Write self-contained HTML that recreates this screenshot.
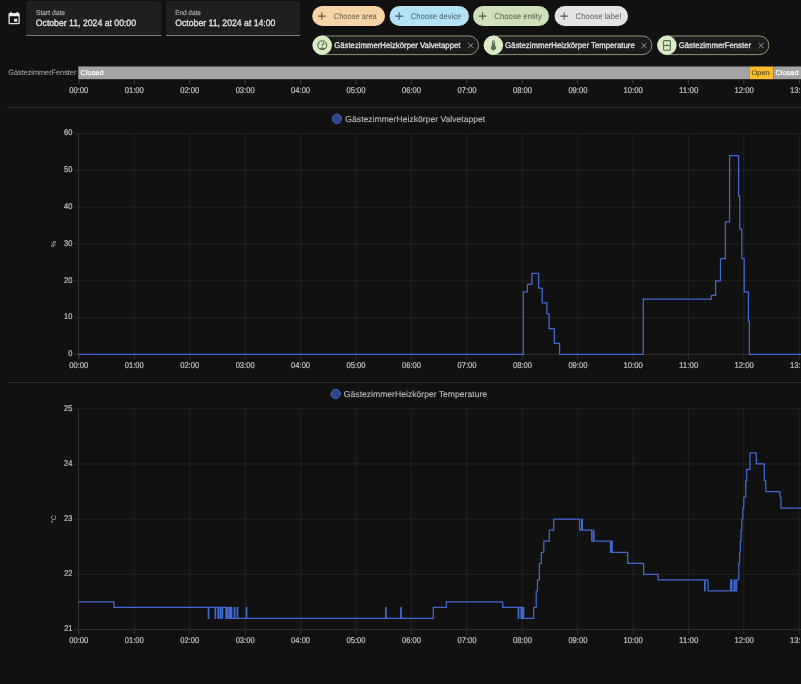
<!DOCTYPE html>
<html><head><meta charset="utf-8">
<style>
html,body{margin:0;padding:0;background:#111111;width:801px;height:684px;overflow:hidden;}
svg{position:absolute;left:0;top:0;font-family:"Liberation Sans", sans-serif;will-change:transform;}
</style></head><body>
<svg width="801" height="684" viewBox="0 0 801 684"><g transform="translate(6.6 11.2) scale(0.625)"><path fill="#e8e8e8" d="M19,19H5V8H19M16,1V3H8V1H6V3H5C3.89,3 3,3.89 3,5V19A2,2 0 0,0 5,21H19A2,2 0 0,0 21,19V5C21,3.89 20.1,3 19,3H18V1M17,12H12V17H17V12Z"/></g>
<path d="M26 36V5A4 4 0 0 1 30 1H157A4 4 0 0 1 161 5V36Z" fill="#1f1f1f"/>
<rect x="26.00" y="35.00" width="135.00" height="1.00" rx="0" fill="#7c7c7c"/>
<path d="M166 36V5A4 4 0 0 1 170 1H296A4 4 0 0 1 300 5V36Z" fill="#1f1f1f"/>
<rect x="166.00" y="35.00" width="134.00" height="1.00" rx="0" fill="#7c7c7c"/>
<rect x="312.20" y="6.00" width="72.80" height="20.00" rx="10" fill="#f7d4a6"/>
<g transform="translate(315.37 9.67) scale(0.536)"><path fill="rgba(0,0,0,0.6)" d="M19,13H13V19H11V13H5V11H11V5H13V11H19V13Z"/></g>
<rect x="389.50" y="6.00" width="79.50" height="20.00" rx="10" fill="#b3e1f6"/>
<g transform="translate(392.67 9.67) scale(0.536)"><path fill="rgba(0,0,0,0.6)" d="M19,13H13V19H11V13H5V11H11V5H13V11H19V13Z"/></g>
<rect x="473.00" y="6.00" width="76.00" height="20.00" rx="10" fill="#cde0b8"/>
<g transform="translate(476.17 9.67) scale(0.536)"><path fill="rgba(0,0,0,0.6)" d="M19,13H13V19H11V13H5V11H11V5H13V11H19V13Z"/></g>
<rect x="554.60" y="6.00" width="73.40" height="20.00" rx="10" fill="#e3e3e3"/>
<g transform="translate(557.77 9.67) scale(0.536)"><path fill="rgba(0,0,0,0.6)" d="M19,13H13V19H11V13H5V11H11V5H13V11H19V13Z"/></g>
<rect x="312.90" y="36" width="165.60" height="18.6" rx="9.3" fill="#1b1b1b" stroke="#899878" stroke-width="1"/>
<circle cx="322.25" cy="45.25" r="9.65" fill="#d9ecc6"/>
<circle cx="322.25" cy="45.25" r="4.45" fill="none" stroke="#5f6b55" stroke-width="1.1"/><path d="M318.70 48.00Q322.25 47.15 325.80 48.00A4.5 4.5 0 0 1 318.70 48.00Z" fill="#5f6b55"/><path d="M322.25 45.65L323.75 42.85" stroke="#5f6b55" stroke-width="1.2" stroke-linecap="round"/><circle cx="319.35" cy="43.85" r="0.5" fill="#5f6b55"/><circle cx="324.85" cy="44.05" r="0.5" fill="#5f6b55"/><circle cx="321.95" cy="42.25" r="0.45" fill="#5f6b55"/>
<path d="M468.30 43.1L473.10 47.9M473.10 43.1L468.30 47.9" stroke="#a8a8a8" stroke-width="0.9"/>
<rect x="484.10" y="36" width="167.80" height="18.6" rx="9.3" fill="#1b1b1b" stroke="#899878" stroke-width="1"/>
<circle cx="493.45" cy="45.25" r="9.65" fill="#d9ecc6"/>
<g transform="translate(487.45 39.25) scale(0.5)"><path fill="#5f6b55" d="M15 13V5A3 3 0 0 0 9 5V13A5 5 0 1 0 15 13M12 4A1 1 0 0 1 13 5V8H11V5A1 1 0 0 1 12 4Z"/></g>
<path d="M641.70 43.1L646.50 47.9M646.50 43.1L641.70 47.9" stroke="#a8a8a8" stroke-width="0.9"/>
<rect x="657.60" y="36" width="111.30" height="18.6" rx="9.3" fill="#1b1b1b" stroke="#899878" stroke-width="1"/>
<circle cx="666.95" cy="45.25" r="9.65" fill="#d9ecc6"/>
<rect x="663.55" y="40.65" width="6.8" height="9.6" rx="1" fill="none" stroke="#5f6b55" stroke-width="1.1"/><rect x="663.55" y="45.05" width="6.8" height="1" fill="#5f6b55"/><rect x="666.25" y="44.15" width="1.4" height="1" fill="#5f6b55"/>
<path d="M758.70 43.1L763.50 47.9M763.50 43.1L758.70 47.9" stroke="#a8a8a8" stroke-width="0.9"/>
<rect x="78.30" y="66.50" width="671.00" height="12.70" rx="0" fill="#a3a3a3"/>
<rect x="749.30" y="66.50" width="24.20" height="12.70" rx="0" fill="#fdbd2c"/>
<rect x="773.50" y="66.50" width="40.00" height="12.70" rx="0" fill="#a3a3a3"/>
<line x1="79.00" y1="79.20" x2="79.00" y2="84.20" stroke="#3a3a3a" stroke-width="1"/>
<line x1="134.40" y1="79.20" x2="134.40" y2="84.20" stroke="#3a3a3a" stroke-width="1"/>
<line x1="189.80" y1="79.20" x2="189.80" y2="84.20" stroke="#3a3a3a" stroke-width="1"/>
<line x1="245.20" y1="79.20" x2="245.20" y2="84.20" stroke="#3a3a3a" stroke-width="1"/>
<line x1="300.60" y1="79.20" x2="300.60" y2="84.20" stroke="#3a3a3a" stroke-width="1"/>
<line x1="356.00" y1="79.20" x2="356.00" y2="84.20" stroke="#3a3a3a" stroke-width="1"/>
<line x1="411.40" y1="79.20" x2="411.40" y2="84.20" stroke="#3a3a3a" stroke-width="1"/>
<line x1="466.80" y1="79.20" x2="466.80" y2="84.20" stroke="#3a3a3a" stroke-width="1"/>
<line x1="522.20" y1="79.20" x2="522.20" y2="84.20" stroke="#3a3a3a" stroke-width="1"/>
<line x1="577.60" y1="79.20" x2="577.60" y2="84.20" stroke="#3a3a3a" stroke-width="1"/>
<line x1="633.00" y1="79.20" x2="633.00" y2="84.20" stroke="#3a3a3a" stroke-width="1"/>
<line x1="688.40" y1="79.20" x2="688.40" y2="84.20" stroke="#3a3a3a" stroke-width="1"/>
<line x1="743.80" y1="79.20" x2="743.80" y2="84.20" stroke="#3a3a3a" stroke-width="1"/>
<line x1="799.20" y1="79.20" x2="799.20" y2="84.20" stroke="#3a3a3a" stroke-width="1"/>
<line x1="7.00" y1="107.50" x2="801.00" y2="107.50" stroke="#2c2c2c" stroke-width="1"/>
<line x1="7.00" y1="382.50" x2="801.00" y2="382.50" stroke="#2c2c2c" stroke-width="1"/>
<line x1="74.00" y1="354.40" x2="860.00" y2="354.40" stroke="#2f2f2f" stroke-width="1"/>
<line x1="74.00" y1="317.58" x2="860.00" y2="317.58" stroke="#222222" stroke-width="1"/>
<line x1="74.00" y1="280.77" x2="860.00" y2="280.77" stroke="#222222" stroke-width="1"/>
<line x1="74.00" y1="243.95" x2="860.00" y2="243.95" stroke="#222222" stroke-width="1"/>
<line x1="74.00" y1="207.13" x2="860.00" y2="207.13" stroke="#222222" stroke-width="1"/>
<line x1="74.00" y1="170.32" x2="860.00" y2="170.32" stroke="#222222" stroke-width="1"/>
<line x1="74.00" y1="133.50" x2="860.00" y2="133.50" stroke="#222222" stroke-width="1"/>
<line x1="79.00" y1="354.40" x2="79.00" y2="359.20" stroke="#2f2f2f" stroke-width="1"/>
<line x1="134.40" y1="133.50" x2="134.40" y2="354.40" stroke="#222222" stroke-width="1"/>
<line x1="134.40" y1="354.40" x2="134.40" y2="359.20" stroke="#2f2f2f" stroke-width="1"/>
<line x1="189.80" y1="133.50" x2="189.80" y2="354.40" stroke="#222222" stroke-width="1"/>
<line x1="189.80" y1="354.40" x2="189.80" y2="359.20" stroke="#2f2f2f" stroke-width="1"/>
<line x1="245.20" y1="133.50" x2="245.20" y2="354.40" stroke="#222222" stroke-width="1"/>
<line x1="245.20" y1="354.40" x2="245.20" y2="359.20" stroke="#2f2f2f" stroke-width="1"/>
<line x1="300.60" y1="133.50" x2="300.60" y2="354.40" stroke="#222222" stroke-width="1"/>
<line x1="300.60" y1="354.40" x2="300.60" y2="359.20" stroke="#2f2f2f" stroke-width="1"/>
<line x1="356.00" y1="133.50" x2="356.00" y2="354.40" stroke="#222222" stroke-width="1"/>
<line x1="356.00" y1="354.40" x2="356.00" y2="359.20" stroke="#2f2f2f" stroke-width="1"/>
<line x1="411.40" y1="133.50" x2="411.40" y2="354.40" stroke="#222222" stroke-width="1"/>
<line x1="411.40" y1="354.40" x2="411.40" y2="359.20" stroke="#2f2f2f" stroke-width="1"/>
<line x1="466.80" y1="133.50" x2="466.80" y2="354.40" stroke="#222222" stroke-width="1"/>
<line x1="466.80" y1="354.40" x2="466.80" y2="359.20" stroke="#2f2f2f" stroke-width="1"/>
<line x1="522.20" y1="133.50" x2="522.20" y2="354.40" stroke="#222222" stroke-width="1"/>
<line x1="522.20" y1="354.40" x2="522.20" y2="359.20" stroke="#2f2f2f" stroke-width="1"/>
<line x1="577.60" y1="133.50" x2="577.60" y2="354.40" stroke="#222222" stroke-width="1"/>
<line x1="577.60" y1="354.40" x2="577.60" y2="359.20" stroke="#2f2f2f" stroke-width="1"/>
<line x1="633.00" y1="133.50" x2="633.00" y2="354.40" stroke="#222222" stroke-width="1"/>
<line x1="633.00" y1="354.40" x2="633.00" y2="359.20" stroke="#2f2f2f" stroke-width="1"/>
<line x1="688.40" y1="133.50" x2="688.40" y2="354.40" stroke="#222222" stroke-width="1"/>
<line x1="688.40" y1="354.40" x2="688.40" y2="359.20" stroke="#2f2f2f" stroke-width="1"/>
<line x1="743.80" y1="133.50" x2="743.80" y2="354.40" stroke="#222222" stroke-width="1"/>
<line x1="743.80" y1="354.40" x2="743.80" y2="359.20" stroke="#2f2f2f" stroke-width="1"/>
<line x1="799.20" y1="133.50" x2="799.20" y2="354.40" stroke="#222222" stroke-width="1"/>
<line x1="799.20" y1="354.40" x2="799.20" y2="359.20" stroke="#2f2f2f" stroke-width="1"/>
<line x1="78.50" y1="133.50" x2="78.50" y2="359.20" stroke="#2f2f2f" stroke-width="1"/>
<line x1="74.00" y1="629.50" x2="860.00" y2="629.50" stroke="#2f2f2f" stroke-width="1"/>
<line x1="74.00" y1="574.33" x2="860.00" y2="574.33" stroke="#222222" stroke-width="1"/>
<line x1="74.00" y1="519.15" x2="860.00" y2="519.15" stroke="#222222" stroke-width="1"/>
<line x1="74.00" y1="463.98" x2="860.00" y2="463.98" stroke="#222222" stroke-width="1"/>
<line x1="74.00" y1="408.80" x2="860.00" y2="408.80" stroke="#222222" stroke-width="1"/>
<line x1="79.00" y1="629.50" x2="79.00" y2="634.30" stroke="#2f2f2f" stroke-width="1"/>
<line x1="134.40" y1="408.80" x2="134.40" y2="629.50" stroke="#222222" stroke-width="1"/>
<line x1="134.40" y1="629.50" x2="134.40" y2="634.30" stroke="#2f2f2f" stroke-width="1"/>
<line x1="189.80" y1="408.80" x2="189.80" y2="629.50" stroke="#222222" stroke-width="1"/>
<line x1="189.80" y1="629.50" x2="189.80" y2="634.30" stroke="#2f2f2f" stroke-width="1"/>
<line x1="245.20" y1="408.80" x2="245.20" y2="629.50" stroke="#222222" stroke-width="1"/>
<line x1="245.20" y1="629.50" x2="245.20" y2="634.30" stroke="#2f2f2f" stroke-width="1"/>
<line x1="300.60" y1="408.80" x2="300.60" y2="629.50" stroke="#222222" stroke-width="1"/>
<line x1="300.60" y1="629.50" x2="300.60" y2="634.30" stroke="#2f2f2f" stroke-width="1"/>
<line x1="356.00" y1="408.80" x2="356.00" y2="629.50" stroke="#222222" stroke-width="1"/>
<line x1="356.00" y1="629.50" x2="356.00" y2="634.30" stroke="#2f2f2f" stroke-width="1"/>
<line x1="411.40" y1="408.80" x2="411.40" y2="629.50" stroke="#222222" stroke-width="1"/>
<line x1="411.40" y1="629.50" x2="411.40" y2="634.30" stroke="#2f2f2f" stroke-width="1"/>
<line x1="466.80" y1="408.80" x2="466.80" y2="629.50" stroke="#222222" stroke-width="1"/>
<line x1="466.80" y1="629.50" x2="466.80" y2="634.30" stroke="#2f2f2f" stroke-width="1"/>
<line x1="522.20" y1="408.80" x2="522.20" y2="629.50" stroke="#222222" stroke-width="1"/>
<line x1="522.20" y1="629.50" x2="522.20" y2="634.30" stroke="#2f2f2f" stroke-width="1"/>
<line x1="577.60" y1="408.80" x2="577.60" y2="629.50" stroke="#222222" stroke-width="1"/>
<line x1="577.60" y1="629.50" x2="577.60" y2="634.30" stroke="#2f2f2f" stroke-width="1"/>
<line x1="633.00" y1="408.80" x2="633.00" y2="629.50" stroke="#222222" stroke-width="1"/>
<line x1="633.00" y1="629.50" x2="633.00" y2="634.30" stroke="#2f2f2f" stroke-width="1"/>
<line x1="688.40" y1="408.80" x2="688.40" y2="629.50" stroke="#222222" stroke-width="1"/>
<line x1="688.40" y1="629.50" x2="688.40" y2="634.30" stroke="#2f2f2f" stroke-width="1"/>
<line x1="743.80" y1="408.80" x2="743.80" y2="629.50" stroke="#222222" stroke-width="1"/>
<line x1="743.80" y1="629.50" x2="743.80" y2="634.30" stroke="#2f2f2f" stroke-width="1"/>
<line x1="799.20" y1="408.80" x2="799.20" y2="629.50" stroke="#222222" stroke-width="1"/>
<line x1="799.20" y1="629.50" x2="799.20" y2="634.30" stroke="#2f2f2f" stroke-width="1"/>
<line x1="78.50" y1="408.80" x2="78.50" y2="634.30" stroke="#2f2f2f" stroke-width="1"/>
<path d="M78.40 354.40H523.30V291.81H527.40V284.45H531.90V273.40H538.60V288.13H542.20V302.86H546.90V313.90H549.10V328.63H554.30V343.35H559.60V354.40H643.30V299.17H711.30V295.49H715.60V280.77H720.50V258.68H725.40V221.86H729.60V155.59H738.60V196.09H739.80V229.22H741.80V258.68H744.20V291.81H748.40V321.26H749.40V354.40H860.00V354.40" fill="none" stroke="#4269d0" stroke-width="1.25" stroke-linejoin="round"/>
<path d="M78.40 601.91H113.90V607.43H208.25V618.47H208.75V607.43H215.10V618.47H215.60V607.43H218.05V618.47H218.55V607.43H220.15V618.47H220.65V607.43H222.15V618.47H222.65V607.43H225.90V618.47H226.70V607.43H227.10V618.47H227.60V607.43H228.00V618.47H229.50V607.43H229.90V618.47H230.50V607.43H230.90V618.47H231.40V607.43H231.80V618.47H234.35V607.43H234.85V618.47H237.15V607.43H237.65V618.47H246.25V607.43H246.75V618.47H385.65V607.43H386.15V618.47H400.75V607.43H401.25V618.47H433.30V607.43H446.40V601.91H502.70V607.43H518.25V618.47H518.75V607.43H521.10V618.47H521.70V607.43H522.40V618.47H523.00V607.43H523.70V618.47H533.60V607.43H536.20V590.88H537.50V579.84H539.40V563.29H541.30V552.26H543.80V541.22H549.30V530.18H553.70V519.15H579.70V530.18H581.60V519.15H582.40V530.18H591.70V541.22H593.30V530.18H594.00V541.22H610.50V552.26H611.60V541.22H612.20V552.26H627.70V563.29H643.60V574.33H658.00V579.84H704.65V590.88H705.15V579.84H708.10V590.88H730.60V579.84H731.00V590.88H731.50V579.84H731.90V590.88H734.10V579.84H734.45V590.88H734.80V579.84H735.15V590.88H736.70V579.84H738.80V563.29H739.60V552.26H740.30V541.22H741.00V530.18H741.80V519.15H742.80V508.12H743.80V497.08H745.80V480.53H746.70V469.49H750.00V452.94H756.30V463.98H764.30V480.53H765.80V491.56H780.00V497.08H781.00V508.12H860.00V508.12" fill="none" stroke="#4269d0" stroke-width="1.25" stroke-linejoin="round"/>
<circle cx="336.9" cy="118.8" r="4.6" fill="#2c4584" stroke="#4269d0" stroke-width="1"/>
<circle cx="335.7" cy="393.9" r="4.6" fill="#2c4584" stroke="#4269d0" stroke-width="1"/>
<g font-family="Liberation Sans, sans-serif" text-rendering="geometricPrecision"><text x="35.90" y="15.00" font-size="7.000" fill="#a8a8a8" font-weight="normal" textLength="29.20" lengthAdjust="spacingAndGlyphs" stroke="#a8a8a8" stroke-width="0.2">Start date</text>
<text x="175.18" y="15.00" font-size="7.000" fill="#a8a8a8" font-weight="normal" textLength="25.61" lengthAdjust="spacingAndGlyphs" stroke="#a8a8a8" stroke-width="0.2">End date</text>
<text x="35.79" y="26.00" font-size="9.300" fill="#e6e6e6" font-weight="normal" textLength="100.25" lengthAdjust="spacingAndGlyphs" stroke="#e6e6e6" stroke-width="0.28">October 11, 2024 at 00:00</text>
<text x="175.29" y="26.00" font-size="9.300" fill="#e6e6e6" font-weight="normal" textLength="100.15" lengthAdjust="spacingAndGlyphs" stroke="#e6e6e6" stroke-width="0.28">October 11, 2024 at 14:00</text>
<text x="333.72" y="19.00" font-size="8.200" fill="rgba(0,0,0,0.62)" font-weight="normal" textLength="43.08" lengthAdjust="spacingAndGlyphs">Choose area</text>
<text x="410.81" y="19.00" font-size="8.200" fill="rgba(0,0,0,0.62)" font-weight="normal" textLength="50.53" lengthAdjust="spacingAndGlyphs">Choose device</text>
<text x="494.30" y="19.00" font-size="8.200" fill="rgba(0,0,0,0.62)" font-weight="normal" textLength="47.61" lengthAdjust="spacingAndGlyphs">Choose entity</text>
<text x="575.60" y="19.00" font-size="8.200" fill="rgba(0,0,0,0.62)" font-weight="normal" textLength="45.52" lengthAdjust="spacingAndGlyphs">Choose label</text>
<text x="334.21" y="48.00" font-size="8.200" fill="#e2e2e2" font-weight="normal" textLength="126.24" lengthAdjust="spacingAndGlyphs" stroke="#e2e2e2" stroke-width="0.28">GästezimmerHeizkörper Valvetappet</text>
<text x="505.01" y="48.00" font-size="8.200" fill="#e2e2e2" font-weight="normal" textLength="129.73" lengthAdjust="spacingAndGlyphs" stroke="#e2e2e2" stroke-width="0.28">GästezimmerHeizkörper Temperature</text>
<text x="678.81" y="48.00" font-size="8.200" fill="#e2e2e2" font-weight="normal" textLength="72.21" lengthAdjust="spacingAndGlyphs" stroke="#e2e2e2" stroke-width="0.28">GästezimmerFenster</text>
<text x="8.29" y="75.00" font-size="7.800" fill="#a8a8a8" font-weight="normal" textLength="68.03" lengthAdjust="spacingAndGlyphs" stroke="#a8a8a8" stroke-width="0.05">GästezimmerFenster</text>
<text x="80.63" y="75.00" font-size="6.900" fill="#ffffff" font-weight="normal" textLength="22.84" lengthAdjust="spacingAndGlyphs" stroke="#ffffff" stroke-width="0.2">Closed</text>
<text x="751.45" y="75.00" font-size="6.900" fill="#55440f" font-weight="normal" textLength="18.24" lengthAdjust="spacingAndGlyphs" stroke="#55440f" stroke-width="0.12">Open</text>
<text x="775.42" y="75.00" font-size="6.900" fill="#ffffff" font-weight="normal" textLength="23.15" lengthAdjust="spacingAndGlyphs" stroke="#ffffff" stroke-width="0.2">Closed</text>
<text x="69.25" y="93.00" font-size="8.400" fill="#c0c0c0" font-weight="normal" textLength="19.00" lengthAdjust="spacingAndGlyphs" stroke="#c0c0c0" stroke-width="0.22">00:00</text>
<text x="124.71" y="93.00" font-size="8.400" fill="#c0c0c0" font-weight="normal" textLength="19.00" lengthAdjust="spacingAndGlyphs" stroke="#c0c0c0" stroke-width="0.22">01:00</text>
<text x="180.17" y="93.00" font-size="8.400" fill="#c0c0c0" font-weight="normal" textLength="19.00" lengthAdjust="spacingAndGlyphs" stroke="#c0c0c0" stroke-width="0.22">02:00</text>
<text x="235.63" y="93.00" font-size="8.400" fill="#c0c0c0" font-weight="normal" textLength="19.00" lengthAdjust="spacingAndGlyphs" stroke="#c0c0c0" stroke-width="0.22">03:00</text>
<text x="291.09" y="93.00" font-size="8.400" fill="#c0c0c0" font-weight="normal" textLength="19.00" lengthAdjust="spacingAndGlyphs" stroke="#c0c0c0" stroke-width="0.22">04:00</text>
<text x="346.55" y="93.00" font-size="8.400" fill="#c0c0c0" font-weight="normal" textLength="19.00" lengthAdjust="spacingAndGlyphs" stroke="#c0c0c0" stroke-width="0.22">05:00</text>
<text x="402.01" y="93.00" font-size="8.400" fill="#c0c0c0" font-weight="normal" textLength="19.00" lengthAdjust="spacingAndGlyphs" stroke="#c0c0c0" stroke-width="0.22">06:00</text>
<text x="457.47" y="93.00" font-size="8.400" fill="#c0c0c0" font-weight="normal" textLength="19.00" lengthAdjust="spacingAndGlyphs" stroke="#c0c0c0" stroke-width="0.22">07:00</text>
<text x="512.93" y="93.00" font-size="8.400" fill="#c0c0c0" font-weight="normal" textLength="19.00" lengthAdjust="spacingAndGlyphs" stroke="#c0c0c0" stroke-width="0.22">08:00</text>
<text x="568.39" y="93.00" font-size="8.400" fill="#c0c0c0" font-weight="normal" textLength="19.00" lengthAdjust="spacingAndGlyphs" stroke="#c0c0c0" stroke-width="0.22">09:00</text>
<text x="623.56" y="93.00" font-size="8.400" fill="#c0c0c0" font-weight="normal" textLength="19.29" lengthAdjust="spacingAndGlyphs" stroke="#c0c0c0" stroke-width="0.22">10:00</text>
<text x="679.01" y="93.00" font-size="8.400" fill="#c0c0c0" font-weight="normal" textLength="19.32" lengthAdjust="spacingAndGlyphs" stroke="#c0c0c0" stroke-width="0.22">11:00</text>
<text x="734.48" y="93.00" font-size="8.400" fill="#c0c0c0" font-weight="normal" textLength="19.29" lengthAdjust="spacingAndGlyphs" stroke="#c0c0c0" stroke-width="0.22">12:00</text>
<text x="789.94" y="93.00" font-size="8.400" fill="#c0c0c0" font-weight="normal" textLength="19.29" lengthAdjust="spacingAndGlyphs" stroke="#c0c0c0" stroke-width="0.22">13:00</text>
<text x="68.24" y="356.00" font-size="8.300" fill="#c0c0c0" font-weight="normal" textLength="4.15" lengthAdjust="spacingAndGlyphs" stroke="#c0c0c0" stroke-width="0.22">0</text>
<text x="64.08" y="319.00" font-size="8.300" fill="#c0c0c0" font-weight="normal" textLength="8.31" lengthAdjust="spacingAndGlyphs" stroke="#c0c0c0" stroke-width="0.22">10</text>
<text x="64.08" y="283.00" font-size="8.300" fill="#c0c0c0" font-weight="normal" textLength="8.31" lengthAdjust="spacingAndGlyphs" stroke="#c0c0c0" stroke-width="0.22">20</text>
<text x="64.08" y="246.00" font-size="8.300" fill="#c0c0c0" font-weight="normal" textLength="8.31" lengthAdjust="spacingAndGlyphs" stroke="#c0c0c0" stroke-width="0.22">30</text>
<text x="64.08" y="209.00" font-size="8.300" fill="#c0c0c0" font-weight="normal" textLength="8.31" lengthAdjust="spacingAndGlyphs" stroke="#c0c0c0" stroke-width="0.22">40</text>
<text x="64.08" y="172.00" font-size="8.300" fill="#c0c0c0" font-weight="normal" textLength="8.31" lengthAdjust="spacingAndGlyphs" stroke="#c0c0c0" stroke-width="0.22">50</text>
<text x="64.08" y="135.00" font-size="8.300" fill="#c0c0c0" font-weight="normal" textLength="8.31" lengthAdjust="spacingAndGlyphs" stroke="#c0c0c0" stroke-width="0.22">60</text>
<text x="69.25" y="368.00" font-size="8.400" fill="#c0c0c0" font-weight="normal" textLength="19.00" lengthAdjust="spacingAndGlyphs" stroke="#c0c0c0" stroke-width="0.22">00:00</text>
<text x="124.71" y="368.00" font-size="8.400" fill="#c0c0c0" font-weight="normal" textLength="19.00" lengthAdjust="spacingAndGlyphs" stroke="#c0c0c0" stroke-width="0.22">01:00</text>
<text x="180.17" y="368.00" font-size="8.400" fill="#c0c0c0" font-weight="normal" textLength="19.00" lengthAdjust="spacingAndGlyphs" stroke="#c0c0c0" stroke-width="0.22">02:00</text>
<text x="235.63" y="368.00" font-size="8.400" fill="#c0c0c0" font-weight="normal" textLength="19.00" lengthAdjust="spacingAndGlyphs" stroke="#c0c0c0" stroke-width="0.22">03:00</text>
<text x="291.09" y="368.00" font-size="8.400" fill="#c0c0c0" font-weight="normal" textLength="19.00" lengthAdjust="spacingAndGlyphs" stroke="#c0c0c0" stroke-width="0.22">04:00</text>
<text x="346.55" y="368.00" font-size="8.400" fill="#c0c0c0" font-weight="normal" textLength="19.00" lengthAdjust="spacingAndGlyphs" stroke="#c0c0c0" stroke-width="0.22">05:00</text>
<text x="402.01" y="368.00" font-size="8.400" fill="#c0c0c0" font-weight="normal" textLength="19.00" lengthAdjust="spacingAndGlyphs" stroke="#c0c0c0" stroke-width="0.22">06:00</text>
<text x="457.47" y="368.00" font-size="8.400" fill="#c0c0c0" font-weight="normal" textLength="19.00" lengthAdjust="spacingAndGlyphs" stroke="#c0c0c0" stroke-width="0.22">07:00</text>
<text x="512.93" y="368.00" font-size="8.400" fill="#c0c0c0" font-weight="normal" textLength="19.00" lengthAdjust="spacingAndGlyphs" stroke="#c0c0c0" stroke-width="0.22">08:00</text>
<text x="568.39" y="368.00" font-size="8.400" fill="#c0c0c0" font-weight="normal" textLength="19.00" lengthAdjust="spacingAndGlyphs" stroke="#c0c0c0" stroke-width="0.22">09:00</text>
<text x="623.56" y="368.00" font-size="8.400" fill="#c0c0c0" font-weight="normal" textLength="19.29" lengthAdjust="spacingAndGlyphs" stroke="#c0c0c0" stroke-width="0.22">10:00</text>
<text x="679.01" y="368.00" font-size="8.400" fill="#c0c0c0" font-weight="normal" textLength="19.32" lengthAdjust="spacingAndGlyphs" stroke="#c0c0c0" stroke-width="0.22">11:00</text>
<text x="734.48" y="368.00" font-size="8.400" fill="#c0c0c0" font-weight="normal" textLength="19.29" lengthAdjust="spacingAndGlyphs" stroke="#c0c0c0" stroke-width="0.22">12:00</text>
<text x="789.94" y="368.00" font-size="8.400" fill="#c0c0c0" font-weight="normal" textLength="19.29" lengthAdjust="spacingAndGlyphs" stroke="#c0c0c0" stroke-width="0.22">13:00</text>
<text x="64.16" y="631.00" font-size="8.300" fill="#c0c0c0" font-weight="normal" textLength="8.31" lengthAdjust="spacingAndGlyphs" stroke="#c0c0c0" stroke-width="0.22">21</text>
<text x="64.17" y="576.00" font-size="8.300" fill="#c0c0c0" font-weight="normal" textLength="8.31" lengthAdjust="spacingAndGlyphs" stroke="#c0c0c0" stroke-width="0.22">22</text>
<text x="64.12" y="521.00" font-size="8.300" fill="#c0c0c0" font-weight="normal" textLength="8.31" lengthAdjust="spacingAndGlyphs" stroke="#c0c0c0" stroke-width="0.22">23</text>
<text x="64.01" y="466.00" font-size="8.300" fill="#c0c0c0" font-weight="normal" textLength="8.31" lengthAdjust="spacingAndGlyphs" stroke="#c0c0c0" stroke-width="0.22">24</text>
<text x="64.11" y="411.00" font-size="8.300" fill="#c0c0c0" font-weight="normal" textLength="8.31" lengthAdjust="spacingAndGlyphs" stroke="#c0c0c0" stroke-width="0.22">25</text>
<text x="69.25" y="643.00" font-size="8.400" fill="#c0c0c0" font-weight="normal" textLength="19.00" lengthAdjust="spacingAndGlyphs" stroke="#c0c0c0" stroke-width="0.22">00:00</text>
<text x="124.71" y="643.00" font-size="8.400" fill="#c0c0c0" font-weight="normal" textLength="19.00" lengthAdjust="spacingAndGlyphs" stroke="#c0c0c0" stroke-width="0.22">01:00</text>
<text x="180.17" y="643.00" font-size="8.400" fill="#c0c0c0" font-weight="normal" textLength="19.00" lengthAdjust="spacingAndGlyphs" stroke="#c0c0c0" stroke-width="0.22">02:00</text>
<text x="235.63" y="643.00" font-size="8.400" fill="#c0c0c0" font-weight="normal" textLength="19.00" lengthAdjust="spacingAndGlyphs" stroke="#c0c0c0" stroke-width="0.22">03:00</text>
<text x="291.09" y="643.00" font-size="8.400" fill="#c0c0c0" font-weight="normal" textLength="19.00" lengthAdjust="spacingAndGlyphs" stroke="#c0c0c0" stroke-width="0.22">04:00</text>
<text x="346.55" y="643.00" font-size="8.400" fill="#c0c0c0" font-weight="normal" textLength="19.00" lengthAdjust="spacingAndGlyphs" stroke="#c0c0c0" stroke-width="0.22">05:00</text>
<text x="402.01" y="643.00" font-size="8.400" fill="#c0c0c0" font-weight="normal" textLength="19.00" lengthAdjust="spacingAndGlyphs" stroke="#c0c0c0" stroke-width="0.22">06:00</text>
<text x="457.47" y="643.00" font-size="8.400" fill="#c0c0c0" font-weight="normal" textLength="19.00" lengthAdjust="spacingAndGlyphs" stroke="#c0c0c0" stroke-width="0.22">07:00</text>
<text x="512.93" y="643.00" font-size="8.400" fill="#c0c0c0" font-weight="normal" textLength="19.00" lengthAdjust="spacingAndGlyphs" stroke="#c0c0c0" stroke-width="0.22">08:00</text>
<text x="568.39" y="643.00" font-size="8.400" fill="#c0c0c0" font-weight="normal" textLength="19.00" lengthAdjust="spacingAndGlyphs" stroke="#c0c0c0" stroke-width="0.22">09:00</text>
<text x="623.56" y="643.00" font-size="8.400" fill="#c0c0c0" font-weight="normal" textLength="19.29" lengthAdjust="spacingAndGlyphs" stroke="#c0c0c0" stroke-width="0.22">10:00</text>
<text x="679.01" y="643.00" font-size="8.400" fill="#c0c0c0" font-weight="normal" textLength="19.32" lengthAdjust="spacingAndGlyphs" stroke="#c0c0c0" stroke-width="0.22">11:00</text>
<text x="734.48" y="643.00" font-size="8.400" fill="#c0c0c0" font-weight="normal" textLength="19.29" lengthAdjust="spacingAndGlyphs" stroke="#c0c0c0" stroke-width="0.22">12:00</text>
<text x="789.94" y="643.00" font-size="8.400" fill="#c0c0c0" font-weight="normal" textLength="19.29" lengthAdjust="spacingAndGlyphs" stroke="#c0c0c0" stroke-width="0.22">13:00</text>
<text x="345.37" y="122.00" font-size="8.500" fill="#bdbdbd" font-weight="normal" textLength="139.89" lengthAdjust="spacingAndGlyphs" stroke="#bdbdbd" stroke-width="0.12">GästezimmerHeizkörper Valvetappet</text>
<text x="343.87" y="397.00" font-size="8.500" fill="#bdbdbd" font-weight="normal" textLength="143.21" lengthAdjust="spacingAndGlyphs" stroke="#bdbdbd" stroke-width="0.12">GästezimmerHeizkörper Temperature</text>
<text transform="translate(56.3 247) rotate(-90)" font-size="7" fill="#a0a0a0" stroke="#a0a0a0" stroke-width="0.12">%</text>
<text transform="translate(56.2 523) rotate(-90)" font-size="7" fill="#a0a0a0" stroke="#a0a0a0" stroke-width="0.12">°C</text></g></svg>
</body></html>
